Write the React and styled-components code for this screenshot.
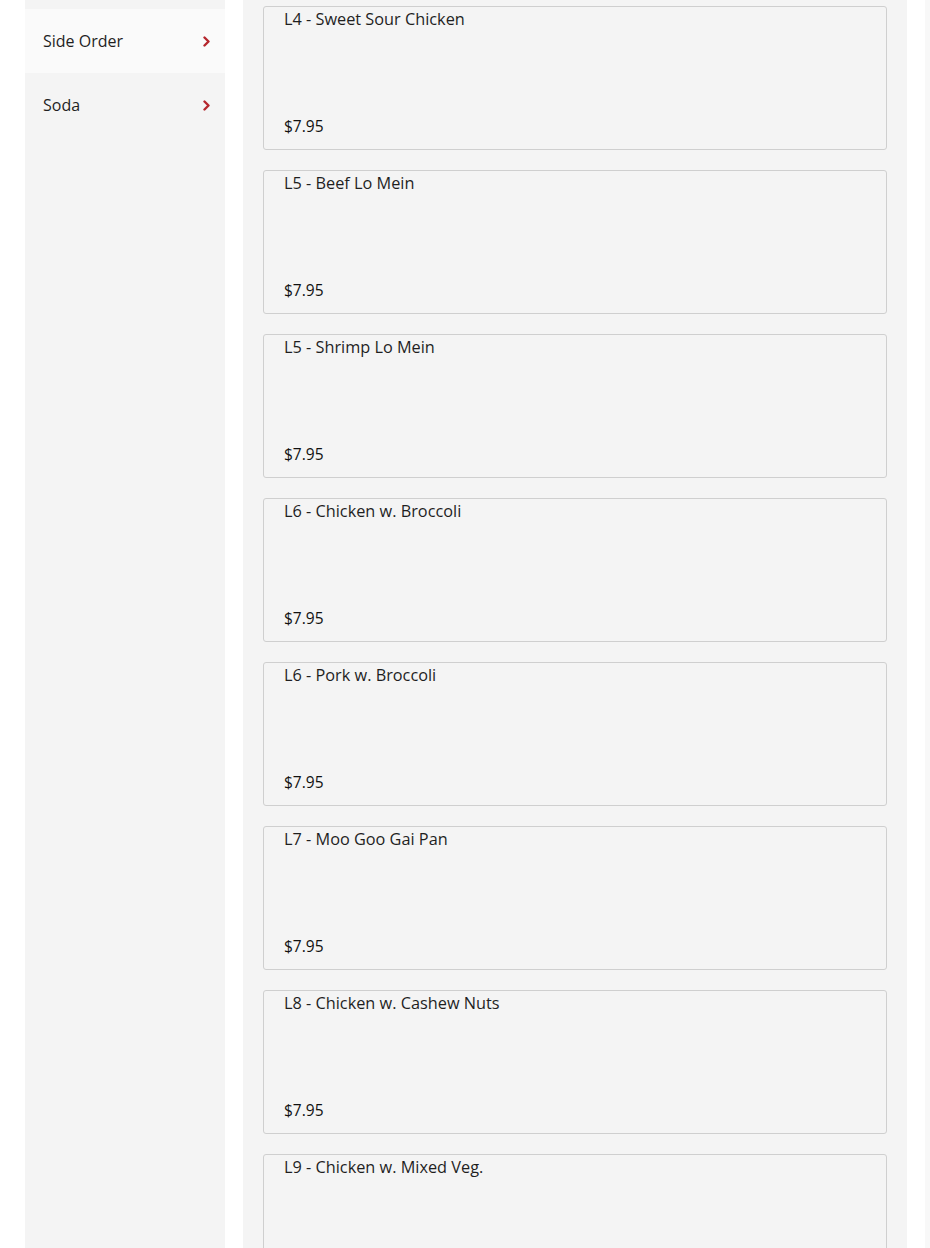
import React from "react";
import styled, { createGlobalStyle } from "styled-components";

const Categories = [
  { name: "Side Order", active: true },
  { name: "Soda", active: false },
];

const Items = [
  { name: "L4 - Sweet Sour Chicken", price: "$7.95" },
  { name: "L5 - Beef Lo Mein", price: "$7.95" },
  { name: "L5 - Shrimp Lo Mein", price: "$7.95" },
  { name: "L6 - Chicken w. Broccoli", price: "$7.95" },
  { name: "L6 - Pork w. Broccoli", price: "$7.95" },
  { name: "L7 - Moo Goo Gai Pan", price: "$7.95" },
  { name: "L8 - Chicken w. Cashew Nuts", price: "$7.95" },
  { name: "L9 - Chicken w. Mixed Veg.", price: "$7.95" },
];

const GlobalStyle = createGlobalStyle`
  html, body {
    margin: 0;
    padding: 0;
    background: #ffffff;
    font-family: "Open Sans", "DejaVu Sans", sans-serif;
    color: #222222;
  }
  body {
    height: 1248px;
    overflow: hidden;
  }
`;

function Chevron() {
  return (
    <svg width="8" height="11" viewBox="0 0 8 11">
      <path
        d="M1.5 1.5 L5.5 5.5 L1.5 9.5"
        fill="none"
        stroke="#b5262d"
        strokeWidth="2.4"
        strokeLinecap="round"
        strokeLinejoin="round"
      />
    </svg>
  );
}

function App() {
  return (
    <>
      <GlobalStyle />
      <Page>
        <Sidebar>
          {Categories.map((c) => (
            <CategoryRow key={c.name} $active={c.active}>
              <span>{c.name}</span>
              <Chevron />
            </CategoryRow>
          ))}
        </Sidebar>
        <Menu>
          {Items.map((item, index) => (
            <ItemCard key={index}>
              <ItemName>{item.name}</ItemName>
              <ItemPrice>{item.price}</ItemPrice>
            </ItemCard>
          ))}
        </Menu>
        <CartEdge />
      </Page>
    </>
  );
}

const Page = styled.div`
  display: flex;
  align-items: stretch;
  gap: 18px;
  padding-left: 25px;
  height: 1248px;
  overflow: hidden;
`;

const Sidebar = styled.div`
  width: 200px;
  flex: none;
  padding-top: 9px;
  background-color: #f4f4f4;
`;

const CategoryRow = styled.div`
  display: flex;
  align-items: center;
  justify-content: space-between;
  height: 64px;
  padding: 0 14px 0 18px;
  background-color: ${(p) => (p.$active ? "#fafafa" : "transparent")};
  font-size: 16px;
  color: #1f1f1f;
  cursor: pointer;
  svg {
    display: block;
  }
`;

const Menu = styled.div`
  width: 664px;
  flex: none;
  box-sizing: border-box;
  padding: 6px 20px 0 20px;
  background-color: #f4f4f4;
  display: flex;
  flex-direction: column;
  gap: 20px;
  overflow: hidden;
`;

const ItemCard = styled.div`
  height: 144px;
  flex: none;
  box-sizing: border-box;
  display: flex;
  flex-direction: column;
  justify-content: space-between;
  padding: 2px 20px 13px 20px;
  border: 1px solid #cfcfcf;
  border-radius: 3px;
  background-color: #f4f4f4;
`;

const ItemName = styled.div`
  font-size: 16.3px;
  line-height: 20px;
  color: #1f1f1f;
`;

const ItemPrice = styled.div`
  font-size: 15.5px;
  line-height: 20px;
  font-weight: 500;
  color: #111111;
`;

const CartEdge = styled.div`
  flex: 1;
  background-color: #f8f8f8;
`;

export default App;
